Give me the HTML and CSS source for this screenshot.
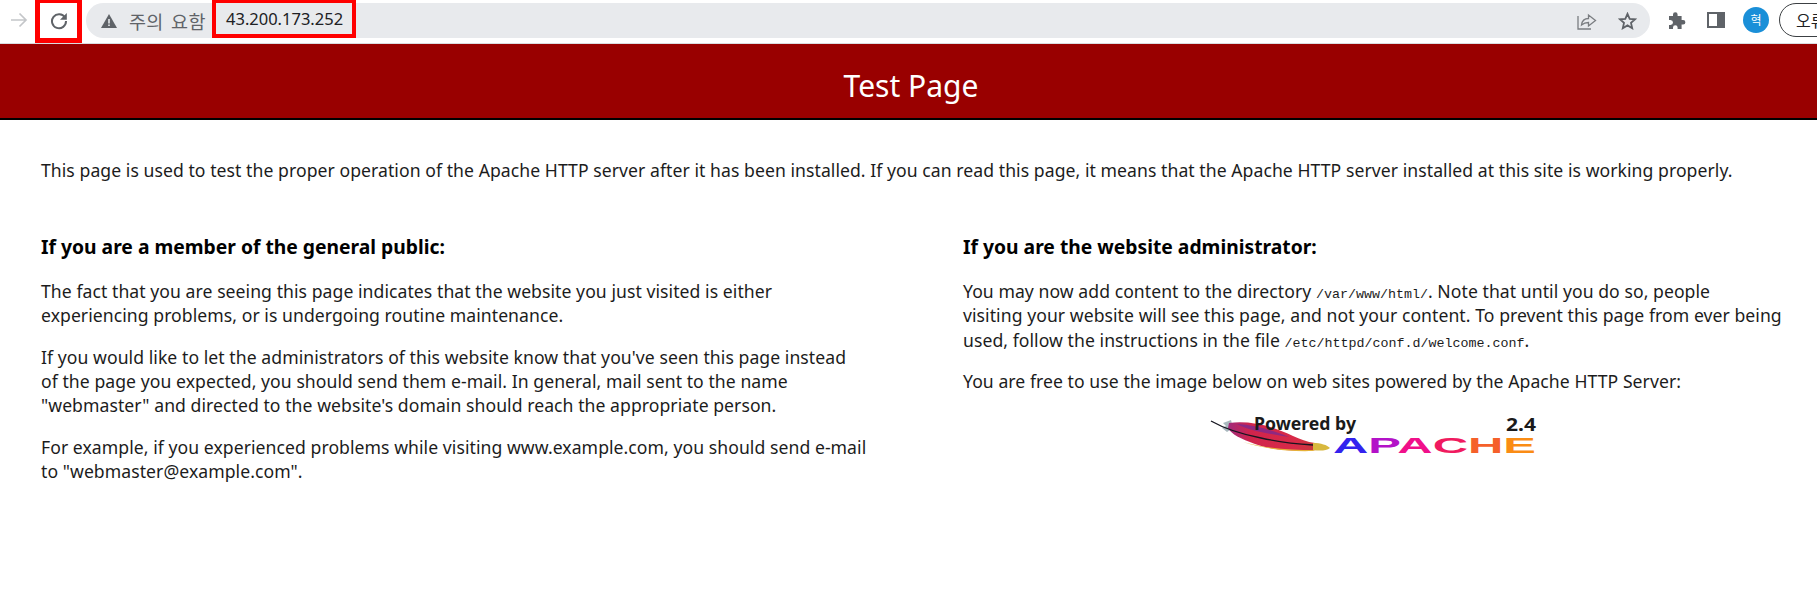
FILE: index.html
```html
<!DOCTYPE html>
<html lang="en">
<head>
<meta charset="utf-8">
<title>Test Page for the Apache HTTP Server</title>
<link rel="stylesheet" href="styles.css">
</head>
<body>
<div class="toolbar">
  <svg class="forward" width="18" height="16" viewBox="0 0 18 16"><path d="M1 8h15M9.500 1.500 16 8l-6.500 6.500" fill="none" stroke="#c4c6c9" stroke-width="1.700"/></svg>
  <div class="reload">
    <svg width="18" height="18" viewBox="0 0 18 18"><path d="M15 5.600A7 7 0 1 0 16 9" fill="none" stroke="#5f6368" stroke-width="2"/><path d="M16.800 1v6.800H10z" fill="#5f6368"/></svg>
  </div>
  <div class="omnibox">
    <svg class="warn" width="16" height="14" viewBox="0 0 16 14"><path d="M8 0 16 14H0z" fill="#5f6368"/><path d="M7.200 5h1.600v4.500H7.200zM7.200 10.500h1.600V12H7.200z" fill="#e8eaed"/></svg>
    <span class="warn-text">주의 요함</span>
    <span class="url">43.200.173.252</span>
    <svg class="share" width="20" height="18" viewBox="0 0 20 18"><path d="M1 4v13h13" fill="none" stroke="#7a7d81" stroke-width="1.300"/><path d="M4.500 13c.5-4 3-6.500 7-6.500V3l7 5.500-7 5.500v-3.500c-3 0-5 .8-7 2.500z" fill="none" stroke="#7a7d81" stroke-width="1.300"/></svg>
    <svg class="star" width="19" height="18" viewBox="0 0 19 18"><path d="m9.500 1.800 2.200 5 5.400.5-4.100 3.600 1.200 5.300-4.700-2.800-4.700 2.800 1.200-5.300-4.100-3.600 5.400-.5z" fill="none" stroke="#5f6368" stroke-width="1.800"/></svg>
  </div>
  <svg class="puzzle" width="18" height="18" viewBox="0 0 18 18"><path d="M1 5h4V3.500a2.300 2.300 0 0 1 4.600 0V5h4v4h1.500a2.300 2.300 0 0 1 0 4.600h-1.500V18h-4v-1.500a2.300 2.300 0 0 0-4.600 0V18H1v-4h1.500a2.500 2.500 0 0 0 0-5H1z" fill="#5f6368"/></svg>
  <svg class="panel" width="18" height="16" viewBox="0 0 18 16"><rect x="1" y="1" width="16" height="14" fill="#fff" stroke="#5f6368" stroke-width="2"/><rect x="10" y="1" width="7" height="14" fill="#5f6368"/></svg>
  <div class="avatar">혁</div>
  <div class="error-pill">오류</div>
</div>
<header class="banner"><h1>Test Page</h1></header>
<main class="content">
  <p class="lead">This page is used to test the proper operation of the Apache HTTP server after it has been installed. If you can read this page, it means that the Apache HTTP server installed at this site is working properly.</p>
  <div class="columns">
    <section class="col">
      <h2>If you are a member of the general public:</h2>
      <p>The fact that you are seeing this page indicates that the website you just visited is either experiencing problems, or is undergoing routine maintenance.</p>
      <p>If you would like to let the administrators of this website know that you've seen this page instead of the page you expected, you should send them e-mail. In general, mail sent to the name "webmaster" and directed to the website's domain should reach the appropriate person.</p>
      <p>For example, if you experienced problems while visiting www.example.com, you should send <span class="keep">e-mail</span> to "webmaster@example.com".</p>
    </section>
    <section class="col">
      <h2>If you are the website administrator:</h2>
      <p>You may now add content to the directory <code>/var/www/html/</code>. Note that until you do so, people<br>visiting your website will see this page, and not your content. To prevent this page from ever being used, follow the instructions in the file <code>/etc/httpd/conf.d/welcome.conf</code>.</p>
      <p>You are free to use the image below on web sites powered by the Apache HTTP Server:</p>
      <div class="logo-wrap">
        <svg class="logo" width="330" height="49" viewBox="18 10 330 49">
          <defs>
            <linearGradient id="fth" x1="0" x2="1" y1="0" y2="0">
              <stop offset="0" stop-color="#a02a7c"/><stop offset=".25" stop-color="#d0244c"/><stop offset=".75" stop-color="#d82a48"/><stop offset="1" stop-color="#c83a3a"/>
            </linearGradient>
          </defs>
          <path d="M40 20 32 23l3 3-4 2 5 4 6-4z" fill="#a9b8be"/>
          <path d="M38 23C60 20 84 27 102 36c7 3 14 6 22 7l2 7c-20 2-46 0-62-6-14-5-24-10-27-16z" fill="url(#fth)"/>
          <path d="M46 24c18 1 38 7 52 13-18-3-40-6-52-13z" fill="#6a2a9e" opacity=".65"/>
          <path d="M52 42c20 6 46 8 72 8l-2 1c-26 1-52-3-70-9z" fill="#e6b23a"/>
          <path d="M122 43c8 0 14 2 17 5-4 3-10 3-17 2z" fill="#d8b83e"/>
          <path d="M20 21c14 8 30 13 50 17 18 4 36 6 52 7" fill="none" stroke="#15151f" stroke-width="1.300"/>
          <text class="logo-by" x="63" y="30" textLength="102" lengthAdjust="spacingAndGlyphs">Powered by</text>
          <text class="logo-ver" x="315" y="31" textLength="30" lengthAdjust="spacingAndGlyphs">2.4</text>
          <text class="logo-apache" x="142" y="53" textLength="203" lengthAdjust="spacingAndGlyphs"><tspan fill="#3322ee">A</tspan><tspan fill="#b312c8">P</tspan><tspan fill="#f0108a">A</tspan><tspan fill="#f01a60">C</tspan><tspan fill="#f5602a">H</tspan><tspan fill="#fa8c14">E</tspan></text>
        </svg>
      </div>
    </section>
  </div>
</main>
</body>
</html>
```
FILE: styles.css
```css
html, body {
  margin: 0;
  padding: 0;
  background: #fff;
  overflow: hidden;
}
body {
  font-family: "Noto Sans", "Noto Sans CJK KR", sans-serif;
  font-size: 17.6px;
  letter-spacing: .06px;
  color: #1c1c1c;
  width: 1817px;
}
.toolbar {
  height: 43px;
  border-bottom: 1px solid #dadce0;
  display: flex;
  align-items: flex-start;
  box-sizing: content-box;
  position: relative;
  white-space: nowrap;
  letter-spacing: 0;
}
.forward {
  margin: 12px 0 0 10px;
  flex: none;
}
.reload {
  margin-left: 7px;
  width: 47px;
  height: 43px;
  box-sizing: border-box;
  border: 5px solid #f00;
  border-top-width: 3px;
  display: flex;
  align-items: center;
  justify-content: center;
  flex: none;
}
.omnibox {
  margin: 3px 0 0 4px;
  width: 1564px;
  height: 35px;
  border-radius: 18px;
  background: #e8eaed;
  position: relative;
  display: flex;
  align-items: center;
  flex: none;
}
.warn {
  margin-left: 15px;
  flex: none;
}
.warn-text {
  margin-left: 12px;
  font-family: "Noto Sans CJK KR", sans-serif;
  font-size: 18.5px;
  word-spacing: 3px;
  letter-spacing: .3px;
  color: #5f6368;
  width: 83px;
  flex: none;
}
.url {
  position: relative;
  font-size: 16.500px;
  color: #202124;
  padding: 0 0 0 14px;
  height: 39px;
  line-height: 39px;
  margin-top: -3px;
  top: -1px;
  width: 144px;
  box-sizing: border-box;
  outline: 4px solid #f00;
  outline-offset: -4px;
  flex: none;
}
.share {
  margin-left: auto;
  flex: none;
}
.star {
  margin: 0 13px 0 21px;
  flex: none;
}
.puzzle {
  margin: 11px 0 0 18px;
  flex: none;
}
.panel {
  margin: 12px 0 0 21px;
  flex: none;
}
.avatar {
  margin: 7px 0 0 18px;
  width: 26px;
  height: 26px;
  border-radius: 50%;
  background: #1a8fd8;
  color: #fff;
  font-family: "Noto Sans CJK KR", sans-serif;
  font-size: 12px;
  line-height: 26px;
  text-align: center;
  flex: none;
}
.error-pill {
  margin: 3px 0 0 10px;
  width: 80px;
  height: 34px;
  border: 1px solid #3c4043;
  border-radius: 18px;
  font-family: "Noto Sans CJK KR", sans-serif;
  font-size: 16px;
  line-height: 32px;
  padding-left: 16px;
  box-sizing: border-box;
  color: #202124;
  flex: none;
}
.banner {
  height: 65px;
  padding-top: 9px;
  background: #990000;
  border-bottom: 2px solid #000;
  display: flex;
  align-items: center;
  justify-content: center;
}
.banner h1 {
  margin: 0 0 0 5px;
  font-size: 30px;
  font-weight: 400;
  letter-spacing: 0;
  color: #fff;
}
.content {
  padding: 38px 41px 0;
}
.lead {
  margin: 0;
  line-height: 24px;
  white-space: nowrap;
}
.columns {
  display: flex;
  margin-top: 52px;
}
.col {
  flex: none;
  width: 826px;
}
.col + .col {
  margin-left: 96px;
  width: 822px;
}
.col h2 {
  margin: 0 0 19px;
  font-size: 19.300px;
  line-height: 26px;
  font-weight: 700;
  letter-spacing: 0;
  color: #000;
}
.col p {
  margin: 0 0 16.800px;
  line-height: 24.400px;
}
.keep {
  white-space: nowrap;
}
code {
  font-family: "Liberation Mono", monospace;
  font-size: 13.330px;
  line-height: 0;
  letter-spacing: 0;
}
.logo-wrap {
  margin-top: 13px;
  display: flex;
  justify-content: center;
}
.logo {
  display: block;
}
.logo-by, .logo-ver {
  font-family: "Noto Sans", sans-serif;
  font-weight: 700;
  font-size: 18px;
  fill: #1a1a1a;
  letter-spacing: 0;
}
.logo-apache {
  font-family: "Liberation Sans", sans-serif;
  font-weight: 700;
  font-size: 22px;
  letter-spacing: 0;
}
```
